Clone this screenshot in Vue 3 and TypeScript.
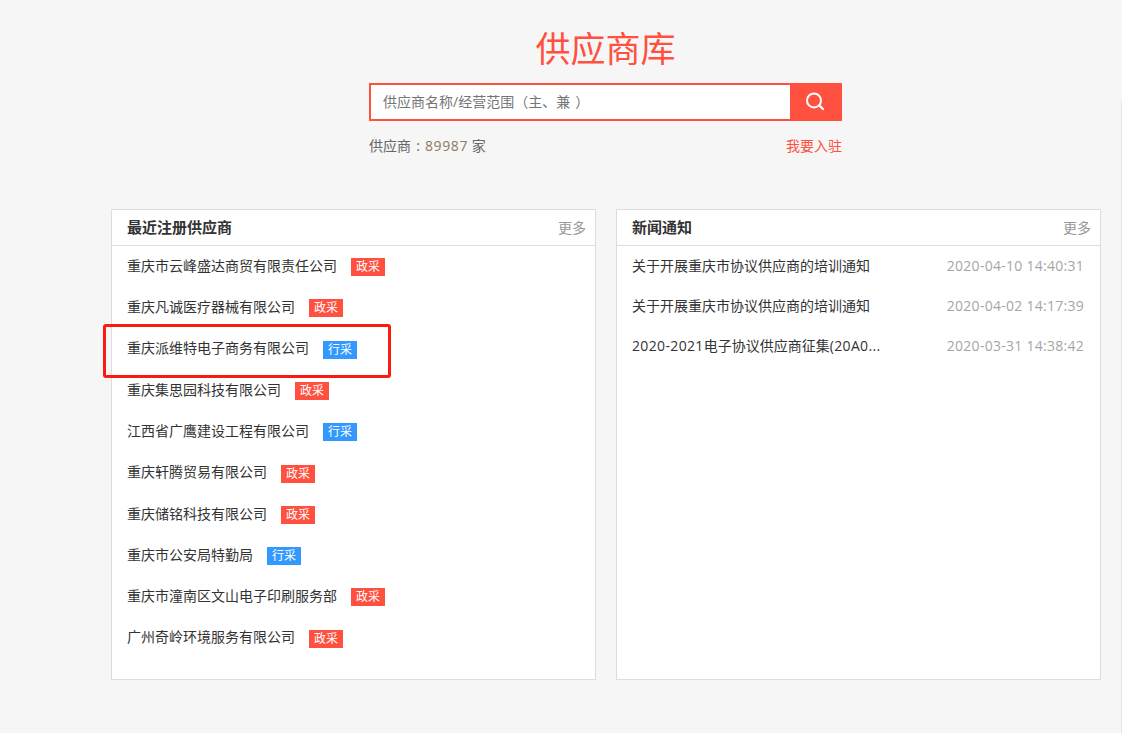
<script setup lang="ts">
interface Supplier { name: string; tag: '政采' | '行采' }
interface NewsPart { text: string; latin: boolean }
interface NewsItem { parts: NewsPart[]; date: string }

const suppliers: Supplier[] = [
  { name: '重庆市云峰盛达商贸有限责任公司', tag: '政采' },
  { name: '重庆凡诚医疗器械有限公司', tag: '政采' },
  { name: '重庆派维特电子商务有限公司', tag: '行采' },
  { name: '重庆集思园科技有限公司', tag: '政采' },
  { name: '江西省广鹰建设工程有限公司', tag: '行采' },
  { name: '重庆轩腾贸易有限公司', tag: '政采' },
  { name: '重庆储铭科技有限公司', tag: '政采' },
  { name: '重庆市公安局特勤局', tag: '行采' },
  { name: '重庆市潼南区文山电子印刷服务部', tag: '政采' },
  { name: '广州奇岭环境服务有限公司', tag: '政采' },
]

const training: NewsPart[] = [{ text: '关于开展重庆市协议供应商的培训通知', latin: false }]

const news: NewsItem[] = [
  { parts: training, date: '2020-04-10 14:40:31' },
  { parts: training, date: '2020-04-02 14:17:39' },
  {
    parts: [
      { text: '2020-2021', latin: true },
      { text: '电子协议供应商征集', latin: false },
      { text: '(20A0...', latin: true },
    ],
    date: '2020-03-31 14:38:42',
  },
]
</script>

<template>
  <div class="page">
    <div class="edge"></div>
    <header class="hero">
      <h1 class="title">供应商库</h1>
      <div class="search">
        <div class="search-input">供应商名称/经营范围（主、兼<span class="paren-close">）</span></div>
        <button class="search-btn" type="button" aria-label="搜索">
          <svg width="20" height="20" viewBox="0 0 20 20" fill="none" stroke="#fff">
            <circle cx="9" cy="8.4" r="7" stroke-width="2" />
            <path d="M14.4 13.6l3.6 3.4" stroke-width="2.4" stroke-linecap="round" />
          </svg>
        </button>
      </div>
      <div class="stats">
        <span>供应商<span class="colon">:</span><span class="num">89987</span> 家</span>
        <a class="join">我要入驻</a>
      </div>
    </header>

    <main class="panels">
      <section class="panel">
        <div class="panel-head">
          <h2>最近注册供应商</h2>
          <span class="more">更多</span>
        </div>
        <ul class="list suppliers">
          <li v-for="(s, i) in suppliers" :key="s.name" class="supplier">
            <span class="name">{{ s.name }}</span>
            <span class="tag" :class="s.tag === '政采' ? 'gov' : 'ind'">{{ s.tag }}</span>
            <span v-if="i === 2" class="highlight"></span>
          </li>
        </ul>
      </section>
      <section class="panel">
        <div class="panel-head">
          <h2>新闻通知</h2>
          <span class="more">更多</span>
        </div>
        <ul class="list">
          <li v-for="n in news" :key="n.date" class="news-row">
            <span class="news-title"><span
              v-for="p in n.parts"
              :key="p.text"
              :class="{ latin: p.latin }"
            >{{ p.text }}</span></span>
            <span class="date">{{ n.date }}</span>
          </li>
        </ul>
      </section>
    </main>
  </div>
</template>

<style>
html, body { margin: 0; background: #f6f6f6; }
</style>

<style scoped>
.page {
  position: relative;
  box-sizing: border-box;
  height: 733px;
  padding: 0 21px 0 111px;
  overflow: hidden;
  background: #f6f6f6;
  font-family: "Open Sans", "Noto Sans CJK SC", sans-serif;
  font-size: 14px;
  color: #333;
}
.edge {
  position: absolute;
  top: 101px;
  right: 0;
  bottom: 0;
  width: 1px;
  background: #e3e6ea;
}
.hero {
  box-sizing: border-box;
  width: 473px;
  height: 209px;
  margin-left: 258px;
  padding-top: 27px;
}
.title {
  height: 44px;
  margin: 0 0 12px;
  line-height: 44px;
  text-align: center;
  font-size: 35px;
  font-weight: 400;
  color: #ff5040;
}
.search {
  display: flex;
  box-sizing: border-box;
  height: 38px;
  border: 2px solid #ff5040;
  background: #fff;
}
.search-input {
  flex: 1;
  padding-left: 12px;
  line-height: 34px;
  color: #757575;
  white-space: nowrap;
}
.paren-close {
  margin-left: 5px;
}
.search-btn {
  display: flex;
  align-items: center;
  justify-content: center;
  width: 50px;
  margin: 0;
  padding: 0;
  border: 0;
  background: #ff5040;
}
.stats {
  display: flex;
  justify-content: space-between;
  margin-top: 15px;
  line-height: 20px;
  color: #666;
}
.colon {
  display: inline-block;
  width: 14px;
  text-align: center;
}
.num {
  letter-spacing: 0.6px;
  color: #8d7a5e;
}
.join { color: #ff5040; }
.panels {
  display: grid;
  grid-template-columns: 485px 485px;
  column-gap: 20px;
}
.panel {
  box-sizing: border-box;
  height: 471px;
  border: 1px solid #ddd;
  background: #fff;
}
.panel-head {
  display: flex;
  align-items: center;
  justify-content: space-between;
  box-sizing: border-box;
  height: 36px;
  padding: 0 9px 2px 15px;
  border-bottom: 1px solid #ddd;
}
.panel-head h2 {
  margin: 0;
  font-size: 15px;
  font-weight: 700;
  color: #333;
}
.more { color: #999; }
.list {
  margin: 0;
  padding: 0;
  list-style: none;
}
.suppliers { padding-top: 0.4px; }
.supplier {
  position: relative;
  display: flex;
  align-items: center;
  box-sizing: border-box;
  height: 41.3px;
  padding: 0 0 2px 15px;
}
.name {
  margin-bottom: 2.6px;
  white-space: nowrap;
}
.tag {
  width: 34px;
  height: 18px;
  margin: 2px 0 0 14px;
  line-height: 18px;
  text-align: center;
  font-size: 12px;
  color: #fff;
}
.gov { background: #ff5040; }
.ind { background: #3399ff; }
.highlight {
  position: absolute;
  left: -9px;
  top: -5px;
  box-sizing: border-box;
  width: 288px;
  height: 54px;
  border: 3px solid #fb1a12;
  border-radius: 3px;
}
.news-row {
  display: flex;
  align-items: center;
  justify-content: space-between;
  box-sizing: border-box;
  height: 40px;
  padding: 0 16px 2px 15px;
}
.latin { letter-spacing: 0.35px; }
.date {
  letter-spacing: 0.27px;
  color: #a5a5a5;
}
</style>
